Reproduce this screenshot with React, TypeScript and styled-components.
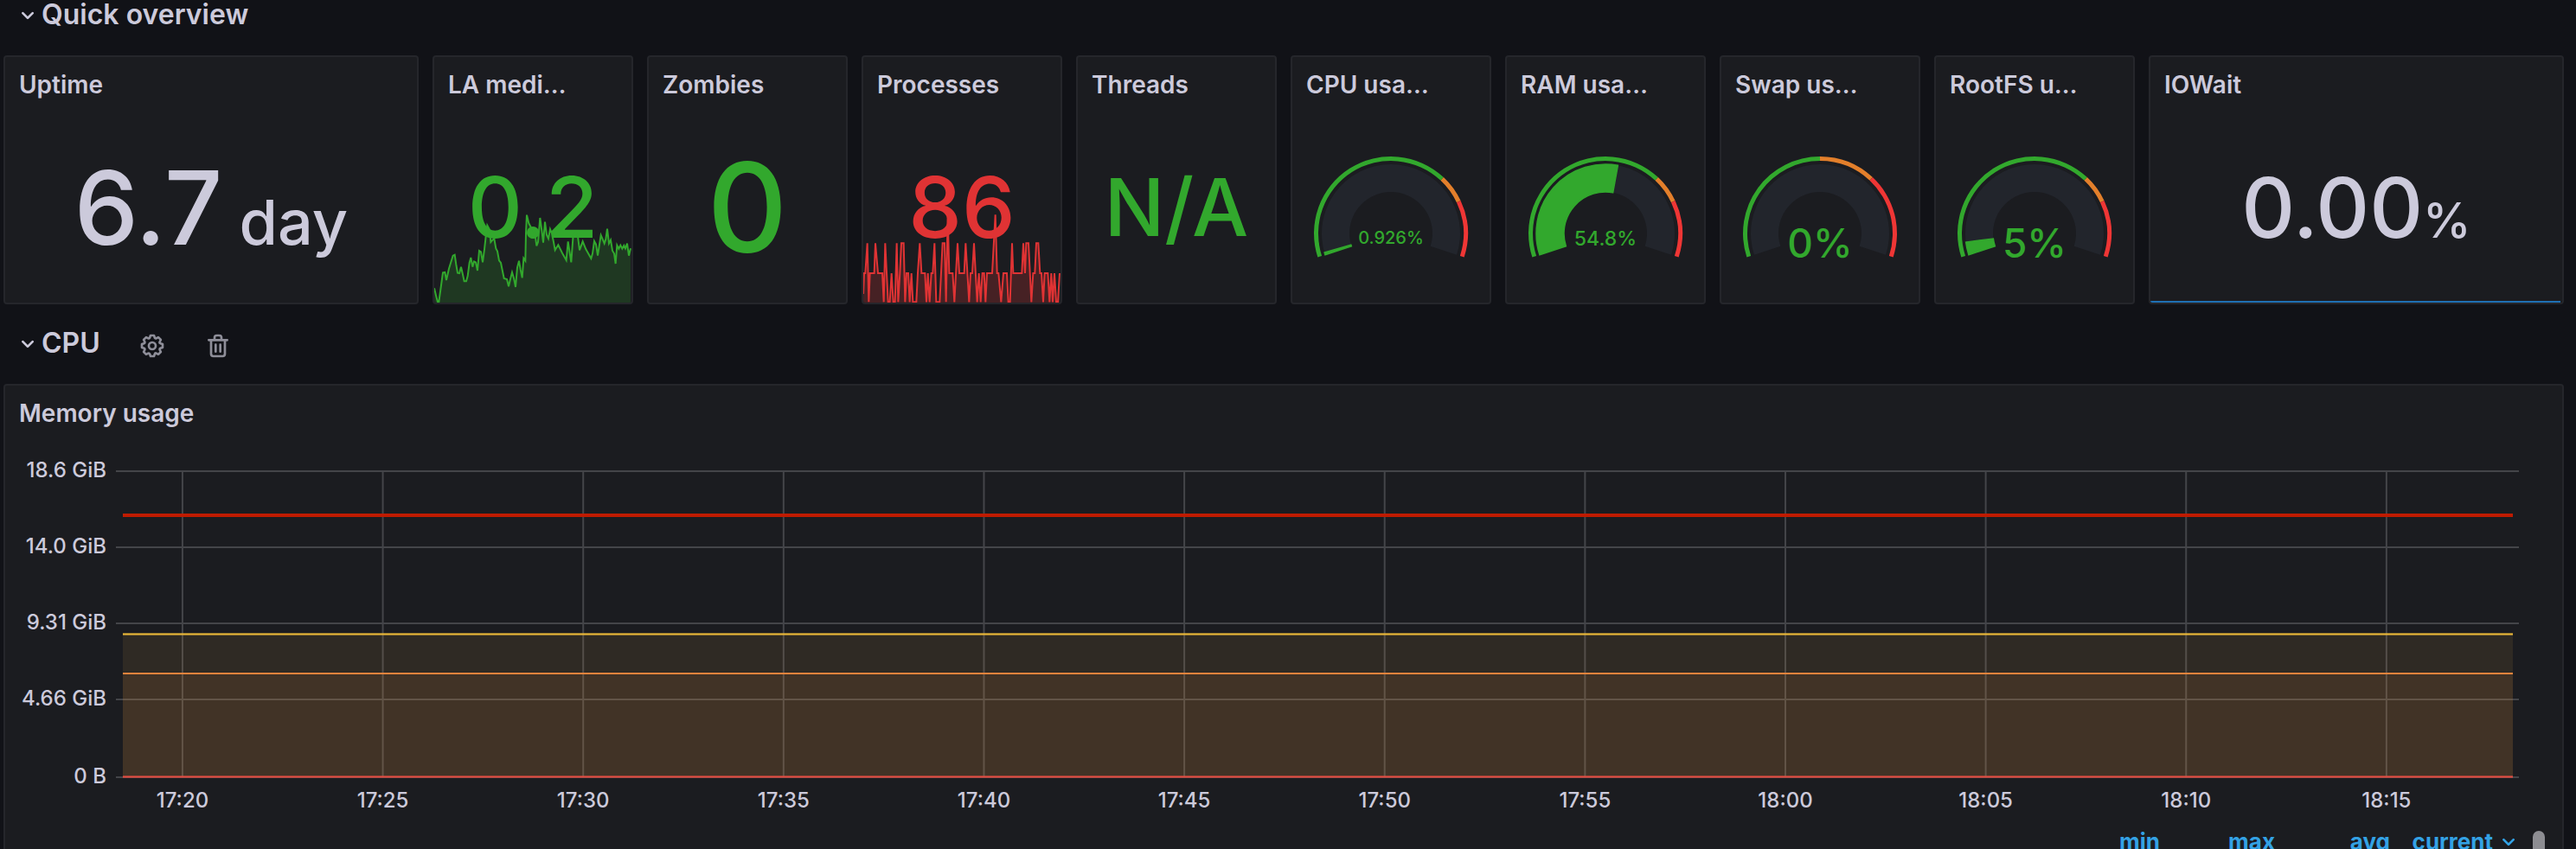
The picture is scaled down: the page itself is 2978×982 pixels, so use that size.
import React from "react";
import styled, { createGlobalStyle } from "styled-components";

const color = {
  page: "#111217",
  panel: "#1b1c20",
  border: "#25262b",
  text: "#cccadb",
  muted: "#8e8e99",
  green: "#32a82d",
  orange: "#e37f2b",
  red: "#e03334",
  arcRed: "#ef3635",
  track: "#22252c",
  grid: "#444549",
  link: "#33a2e5",
};

const GlobalStyle = createGlobalStyle`
  * { box-sizing: border-box; }
  body {
    margin: 0;
    background: ${color.page};
    color: ${color.text};
    font-family: Inter, "Liberation Sans", sans-serif;
  }
  button {
    background: none;
    border: 0;
    padding: 0;
    color: inherit;
    font: inherit;
    cursor: pointer;
  }
`;

const Viewport = styled.main`
  height: 100vh;
  overflow: hidden;
`;

const Dashboard = styled.div`
  display: flex;
  flex-direction: column;
  gap: 16px;
  margin: -12px 14px 0 4px;
`;

const RowHeader = styled.div`
  display: flex;
  align-items: center;
  height: 60px;
  padding: 0 0 2px 12px;
`;

const RowToggle = styled.button`
  display: flex;
  align-items: center;
  margin-right: 22px;
`;

const RowTitle = styled.h2`
  margin: 0;
  font-size: 32px;
  line-height: 32px;
  font-weight: 600;
`;

const IconSvg = styled.svg`
  display: block;
  width: 32px;
  height: 32px;
  margin-top: 2px;
  fill: currentColor;
`;

const RowAction = styled.button`
  padding: 4px 22px 0;
  color: ${color.muted};
`;

const PanelGrid = styled.div`
  display: grid;
  grid-template-columns: repeat(24, minmax(0, 1fr));
  gap: 16px;
`;

const Panel = styled.section<{ $span: number; $height: number }>`
  grid-column: span ${(p) => p.$span};
  display: flex;
  flex-direction: column;
  min-height: ${(p) => p.$height}px;
  background: ${color.panel};
  border: 2px solid ${color.border};
  border-radius: 4px;
  overflow: hidden;
`;

const PanelTitle = styled.h3`
  margin: 0;
  padding: 0 64px 0 16px;
  font-size: 28px;
  line-height: 64px;
  font-weight: 600;
  white-space: nowrap;
  overflow: hidden;
  text-overflow: ellipsis;
`;

const StatBody = styled.div`
  position: relative;
  flex: 1;
  display: flex;
  align-items: center;
  justify-content: center;
`;

const Value = styled.div<{ $size: number; $color?: string }>`
  font-size: ${(p) => p.$size}px;
  line-height: 1;
  font-weight: 500;
  white-space: pre;
  color: ${(p) => p.$color ?? color.text};
`;

const Unit = styled.span<{ $size: number }>`
  font-size: ${(p) => p.$size}px;
`;

const SparkSvg = styled.svg`
  position: absolute;
  left: 0;
  bottom: 0;
  width: 100%;
  height: 120px;
`;

const FlatLine = styled.div`
  position: absolute;
  left: 0;
  right: 2px;
  bottom: 0;
  height: 2px;
  background: #1f70b4;
`;

const GaugeSvg = styled.svg`
  display: block;
  width: 228px;
  height: 220px;
`;

const GaugeText = styled.text<{ $size: number }>`
  font-size: ${(p) => p.$size}px;
  font-weight: 500;
  fill: ${color.green};
  text-anchor: middle;
`;

const ChartSvg = styled.svg`
  display: block;
  width: calc(100% - 178px);
  height: 440px;
  margin-left: 128px;
  overflow: visible;
`;

const AxisText = styled.text`
  font-size: 24px;
  font-weight: 500;
  fill: ${color.text};
`;

const Series = styled.rect`
  width: calc(100% - 15px);
`;

const Legend = styled.div`
  display: flex;
  align-items: flex-start;
  justify-content: flex-end;
  gap: 18px;
  padding-right: 20px;
`;

const LegendTable = styled.table`
  border-collapse: collapse;
  margin-top: 8px;
`;

const LegendHead = styled.th<{ $width: number }>`
  width: ${(p) => p.$width}px;
  padding: 0;
  color: ${color.link};
  font-size: 26px;
  line-height: 32px;
  font-weight: 700;
`;

const SortButton = styled.button`
  display: flex;
  align-items: center;
  justify-content: flex-end;
  width: 100%;
  height: 32px;
`;

const SortIcon = styled(IconSvg)`
  margin: 0 -6px 0 2px;
`;

const ScrollThumb = styled.div`
  width: 14px;
  height: 80px;
  margin-top: 11px;
  border-radius: 7px;
  background: #8d8d92;
`;

const PATH = {
  angleDown:
    "M17,9.17a1,1,0,0,0-1.41,0L12,12.71,8.46,9.17a1,1,0,0,0-1.41,0,1,1,0,0,0,0,1.42l4.24,4.24a1,1,0,0,0,1.42,0L17,10.59A1,1,0,0,0,17,9.17Z",
  cog: "M21.32,9.55l-1.89-.63.89-1.78A1,1,0,0,0,20.13,6L18,3.87a1,1,0,0,0-1.15-.19l-1.78.89-.63-1.89A1,1,0,0,0,13.5,2h-3a1,1,0,0,0-.95.68L8.92,4.57,7.14,3.68A1,1,0,0,0,6,3.87L3.87,6a1,1,0,0,0-.19,1.15l.89,1.78-1.89.63A1,1,0,0,0,2,10.5v3a1,1,0,0,0,.68.95l1.89.63-.89,1.78A1,1,0,0,0,3.87,18L6,20.13a1,1,0,0,0,1.15.19l1.78-.89.63,1.89a1,1,0,0,0,.95.68h3a1,1,0,0,0,.95-.68l.63-1.89,1.78.89A1,1,0,0,0,18,20.13L20.13,18a1,1,0,0,0,.19-1.15l-.89-1.78,1.89-.63A1,1,0,0,0,22,13.5v-3A1,1,0,0,0,21.32,9.55ZM20,12.78l-1.2.4A2,2,0,0,0,17.64,16l.57,1.14-1.1,1.1L16,17.64a2,2,0,0,0-2.79,1.16l-.4,1.2H11.22l-.4-1.2A2,2,0,0,0,8,17.64l-1.14.57-1.1-1.1L6.36,16A2,2,0,0,0,5.2,13.18L4,12.78V11.22l1.2-.4A2,2,0,0,0,6.36,8L5.79,6.89l1.1-1.1L8,6.36A2,2,0,0,0,10.82,5.2l.4-1.2h1.56l.4,1.2A2,2,0,0,0,16,6.36l1.14-.57,1.1,1.1L17.64,8a2,2,0,0,0,1.16,2.79l1.2.4ZM12,8a4,4,0,1,0,4,4A4,4,0,0,0,12,8Zm0,6a2,2,0,1,1,2-2A2,2,0,0,1,12,14Z",
  trash:
    "M10,18a1,1,0,0,0,1-1V11a1,1,0,0,0-2,0v6A1,1,0,0,0,10,18ZM20,6H16V5a3,3,0,0,0-3-3H11A3,3,0,0,0,8,5V6H4A1,1,0,0,0,4,8H5V19a3,3,0,0,0,3,3h8a3,3,0,0,0,3-3V8h1a1,1,0,0,0,0-2ZM10,5a1,1,0,0,1,1-1h2a1,1,0,0,1,1,1V6H10Zm7,14a1,1,0,0,1-1,1H8a1,1,0,0,1-1-1V8H17Zm-3-1a1,1,0,0,0,1-1V11a1,1,0,0,0-2,0v6A1,1,0,0,0,14,18Z",
};

const Icon = ({ d }: { d: string }) => (
  <IconSvg viewBox="0 0 24 24" aria-hidden="true">
    <path d={d} />
  </IconSvg>
);

const LOAD =
  "36,310 42,335 48,358 52,358 60,300 66,256 73,255 78,282 87,242 101,197 107,194 112,228 117,257 123,258 129,236 134,258 140,286 147,286 152,268 158,222 163,204 169,236 174,217 180,220 186,249 192,180 198,184 204,220 210,175 215,130 220,92 227,105 232,150 238,143 244,138 250,172 255,182 261,214 267,222 278,276 288,279 294,304 300,278 306,255 312,275 318,306 324,238 330,215 335,245 341,274 346,206 352,215 354,120 357,56 364,85 372,100 380,110 386,125 391,163 396,150 403,66 409,110 414,152 420,80 426,125 432,138 438,105 444,120 450,150 455,178 466,160 480,188 494,213 500,148 511,220 518,125 528,118 534,130 540,178 551,148 562,175 580,207 585,190 591,147 597,158 603,197 614,126 620,140 626,155 631,140 636,104 642,155 648,143 654,180 660,190 665,225 670,161 676,173 682,161 688,173 694,162 699,172 705,155 711,197 717,172";

const PROCESSES =
  "24,330 27,258 31,258 38,154 43,358 47,258 62,258 66,154 75,258 90,258 95,358 100,154 110,358 116,358 122,258 128,358 134,358 140,154 145,358 151,258 156,154 164,154 169,358 174,258 180,258 185,358 191,258 196,358 208,358 213,258 220,154 226,258 238,258 243,358 248,258 254,358 260,258 265,258 271,154 277,358 289,358 299,154 306,154 311,358 317,55 322,258 334,258 340,358 351,154 357,258 374,258 379,154 391,358 396,258 402,258 408,154 419,358 425,258 431,358 437,258 443,258 448,358 453,258 471,258 482,55 488,258 493,258 502,358 510,258 522,258 527,358 533,358 540,154 544,258 574,258 579,154 585,258 589,154 597,154 607,358 613,258 619,258 624,154 631,154 637,258 642,258 648,358 653,258 664,258 670,358 676,258 681,358 687,258 693,358 699,358 705,258";

type SparkProps = { points: string; from: number; to: number; stroke: string; fill: string };

const Sparkline = ({ points, from, to, stroke, fill }: SparkProps) => (
  <SparkSvg viewBox={`${from} 0 684 360`} preserveAspectRatio="none" aria-hidden="true">
    <polygon points={`${from},360 ${points} ${to},360`} fill={fill} />
    <polyline points={points} fill="none" stroke={stroke} strokeWidth="6" />
  </SparkSvg>
);

const CX = 114;
const CY = 140;

/* The dial sweeps 216 degrees, starting 18 degrees below the horizontal. */
const point = (radius: number, fraction: number) => {
  const a = ((198 - 216 * fraction) * Math.PI) / 180;
  return `${(CX + radius * Math.cos(a)).toFixed(2)} ${(CY - radius * Math.sin(a)).toFixed(2)}`;
};

const band = (outer: number, inner: number, from: number, to: number) => {
  const large = (to - from) * 216 > 180 ? 1 : 0;
  return (
    `M${point(outer, from)}A${outer} ${outer} 0 ${large} 1 ${point(outer, to)}` +
    `L${point(inner, to)}A${inner} ${inner} 0 ${large} 0 ${point(inner, from)}Z`
  );
};

type GaugeProps = { value: number; label: string; size: number; baseline: number; warn: number; crit: number };

const Gauge = ({ value, label, size, baseline, warn, crit }: GaugeProps) => (
  <GaugeSvg viewBox="0 0 228 220" role="img" aria-label={label}>
    <path d={band(80, 48, 0, 1)} fill={color.track} />
    {value > 0 && <path d={band(80, 48, 0, value)} fill={color.green} stroke={color.green} strokeWidth="1.5" />}
    <path d={band(89, 84, 0, warn)} fill={color.green} />
    <path d={band(89, 84, warn, crit)} fill={color.orange} />
    <path d={band(89, 84, crit, 1)} fill={color.arcRed} />
    <GaugeText $size={size} x={CX} y={baseline}>
      {label}
    </GaugeText>
  </GaugeSvg>
);

const SmallPanel = ({ title, span = 2, children }: { title: string; span?: number; children: React.ReactNode }) => (
  <Panel $span={span} $height={288}>
    <PanelTitle>{title}</PanelTitle>
    <StatBody>{children}</StatBody>
  </Panel>
);

const yTicks = [
  { y: 35, label: "18.6 GiB" },
  { y: 123, label: "14.0 GiB" },
  { y: 211, label: "9.31 GiB" },
  { y: 299, label: "4.66 GiB" },
  { y: 389, label: "0 B" },
];

const xTicks = [
  "17:20", "17:25", "17:30", "17:35", "17:40", "17:45",
  "17:50", "17:55", "18:00", "18:05", "18:10", "18:15",
].map((label, i) => ({ label, x: `${(2.77 + i * 8.338).toFixed(3)}%` }));

const MemoryChart = () => (
  <ChartSvg role="img" aria-label="Memory usage">
    {yTicks.map((t) => (
      <g key={t.label}>
        <line x1="0" x2="100%" y1={t.y} y2={t.y} stroke={color.grid} strokeWidth="2" />
        <AxisText x={-11} y={t.y + 7} textAnchor="end">
          {t.label}
        </AxisText>
      </g>
    ))}
    {xTicks.map((t) => (
      <g key={t.label}>
        <line x1={t.x} x2={t.x} y1="34" y2="389" stroke={color.grid} strokeWidth="2" />
        <AxisText x={t.x} y={424} textAnchor="middle">
          {t.label}
        </AxisText>
      </g>
    ))}
    <Series x="8" y="224" height="165" fill="#e3a852" fillOpacity="0.1" />
    <Series x="8" y="269" height="120" fill="#e38e39" fillOpacity="0.1" />
    <Series x="8" y="222" height="3" fill="#eab839" fillOpacity="0.6" />
    <Series x="8" y="223" height="1" fill="#eab839" />
    <Series x="8" y="268" height="2" fill="#ef843c" />
    <Series x="8" y="387" height="3" fill="#e24d42" fillOpacity="0.6" />
    <Series x="8" y="388" height="1" fill="#e24d42" />
    <Series x="8" y="84" height="4" fill="#bf1b00" />
  </ChartSvg>
);

const columns = [
  { label: "min", width: 133 },
  { label: "max", width: 133 },
  { label: "avg", width: 133 },
  { label: "current", width: 147, sorted: true },
];

export default function App() {
  return (
    <Viewport>
      <GlobalStyle />
      <Dashboard>
        <RowHeader>
          <RowToggle>
            <Icon d={PATH.angleDown} />
            <RowTitle>Quick overview</RowTitle>
          </RowToggle>
        </RowHeader>

        <PanelGrid>
          <SmallPanel title="Uptime" span={4}>
            <Value $size={118}>
              6.7<Unit $size={72}> day</Unit>
            </Value>
          </SmallPanel>
          <SmallPanel title="LA medium">
            <Value $size={98} $color={color.green}>0.2</Value>
            <Sparkline points={LOAD} from={36} to={717} stroke={color.green} fill="rgba(50, 168, 45, 0.2)" />
          </SmallPanel>
          <SmallPanel title="Zombies">
            <Value $size={144} $color={color.green}>0</Value>
          </SmallPanel>
          <SmallPanel title="Processes">
            <Value $size={98} $color={color.red}>86</Value>
            <Sparkline points={PROCESSES} from={24} to={705} stroke={color.red} fill="rgba(245, 54, 54, 0.2)" />
          </SmallPanel>
          <SmallPanel title="Threads">
            <Value $size={92} $color={color.green}>N/A</Value>
          </SmallPanel>
          <SmallPanel title="CPU usage">
            <Gauge value={0.00926} label="0.926%" size={20} baseline={152} warn={0.7} crit={0.8} />
          </SmallPanel>
          <SmallPanel title="RAM usage">
            <Gauge value={0.548} label="54.8%" size={23} baseline={154} warn={0.7} crit={0.8} />
          </SmallPanel>
          <SmallPanel title="Swap usage">
            <Gauge value={0} label="0%" size={46} baseline={168} warn={0.5} crit={0.7} />
          </SmallPanel>
          <SmallPanel title="RootFS usage">
            <Gauge value={0.05} label="5%" size={46} baseline={168} warn={0.7} crit={0.8} />
          </SmallPanel>
          <SmallPanel title="IOWait" span={4}>
            <Value $size={96}>
              0.00<Unit $size={56}>%</Unit>
            </Value>
            <FlatLine />
          </SmallPanel>
        </PanelGrid>

        <RowHeader>
          <RowToggle>
            <Icon d={PATH.angleDown} />
            <RowTitle>CPU</RowTitle>
          </RowToggle>
          <RowAction aria-label="Row settings">
            <Icon d={PATH.cog} />
          </RowAction>
          <RowAction aria-label="Delete row">
            <Icon d={PATH.trash} />
          </RowAction>
        </RowHeader>

        <PanelGrid>
          <Panel $span={24} $height={592}>
            <PanelTitle>Memory usage</PanelTitle>
            <MemoryChart />
            <Legend>
              <LegendTable>
                <thead>
                  <tr>
                    {columns.map((c) => (
                      <LegendHead key={c.label} $width={c.width} scope="col">
                        <SortButton>
                          {c.label}
                          {c.sorted && (
                            <SortIcon viewBox="0 0 24 24" aria-hidden="true">
                              <path d={PATH.angleDown} />
                            </SortIcon>
                          )}
                        </SortButton>
                      </LegendHead>
                    ))}
                  </tr>
                </thead>
              </LegendTable>
              <ScrollThumb />
            </Legend>
          </Panel>
        </PanelGrid>
      </Dashboard>
    </Viewport>
  );
}
